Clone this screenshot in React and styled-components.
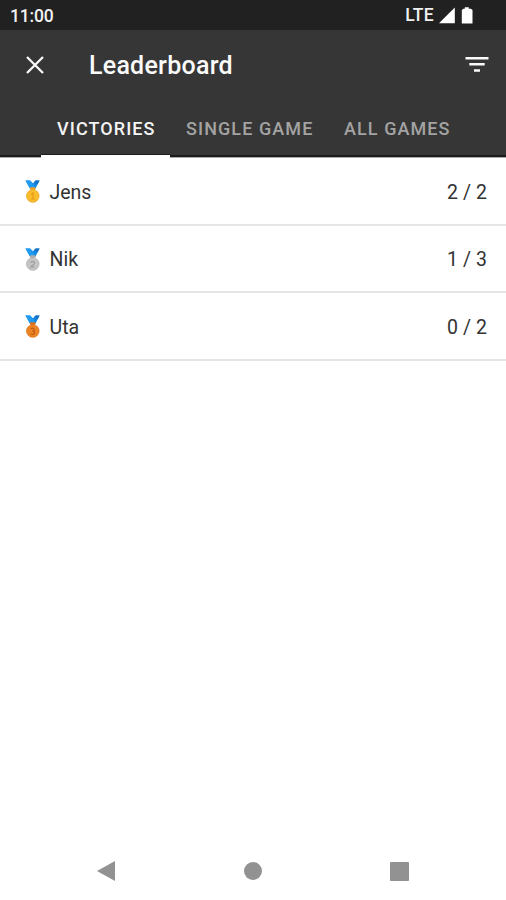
import React from 'react';
import styled, { createGlobalStyle } from 'styled-components';

const GlobalStyle = createGlobalStyle`
  * { box-sizing: border-box; }
  body { margin: 0; background: #fff; font-family: Roboto, sans-serif; }
`;

const Screen = styled.div`
  display: flex;
  flex-direction: column;
  width: 506px;
  height: 900px;
  background: #fff;
  overflow: hidden;
`;

const StatusBar = styled.div`
  display: flex;
  align-items: center;
  justify-content: space-between;
  height: 30px;
  padding: 2px 33px 0 10px;
  background: #212121;
  color: #f1f1f1;
`;

const Clock = styled.span`
  font-size: 17.5px;
  font-weight: 500;
  line-height: 28px;
  letter-spacing: -0.2px;
`;

const StatusIcons = styled.div`
  display: flex;
  align-items: center;
  gap: 5px;
  svg { display: block; margin-top: -2px; }
`;

const Network = styled.span`
  font-size: 17.5px;
  font-weight: 500;
  line-height: 26px;
  padding-bottom: 2px;
  letter-spacing: 0.3px;
`;

const Header = styled.header`
  height: 128px;
  background: #363636;
  color: #fafafa;
`;

const Toolbar = styled.div`
  display: flex;
  align-items: center;
  height: 70px;
  padding: 0 17px 0 26px;
`;

const Title = styled.h1`
  flex: 1;
  margin: 2px 0 0 44px;
  font-size: 25px;
  font-weight: 500;
  line-height: 30px;
  letter-spacing: 0.25px;
`;

const IconButton = styled.button`
  display: block;
  padding: 0;
  border: 0;
  background: none;
  color: inherit;
  svg { display: block; }
`;

const Tabs = styled.nav`
  display: flex;
  height: 58px;
  padding-left: 41px;
  background: linear-gradient(#363636 55px, #1c1c1c 55px, #1c1c1c 57px, #aaa 57px);
`;

const Tab = styled.button`
  flex: none;
  width: ${({ $width }) => $width}px;
  padding: 3px 0 0 16px;
  border: 0;
  border-bottom: 3px solid ${({ $active }) => ($active ? '#fff' : 'transparent')};
  background: none;
  box-shadow: ${({ $active }) => ($active ? 'inset 0 -1px #1c1c1c' : 'none')};
  color: ${({ $active }) => ($active ? '#f5f5f5' : '#a3a3a3')};
  font: 500 18px/52px Roboto, sans-serif;
  letter-spacing: 1.08px;
  text-align: left;
  white-space: nowrap;
`;

const List = styled.ul`
  flex: 1;
  margin: 0;
  padding: 0;
  list-style: none;
`;

const Row = styled.li`
  display: flex;
  align-items: center;
  height: 67.5px;
  padding: 2px 19px 0 24px;
  border-bottom: 2px solid #e5e5e5;
  color: #333;
  font-size: 19.5px;
  line-height: 24px;
  svg { display: block; }
`;

const Name = styled.span`
  flex: 1;
  margin-left: 8.5px;
  padding-top: 2px;
`;

const Score = styled.span`
  padding-top: 2px;
  letter-spacing: 0.1px;
  margin-right: -0.1px;
`;

const NavBar = styled.nav`
  display: flex;
  justify-content: space-between;
  align-items: center;
  height: 58px;
  padding: 0 97px;
  color: #929292;
`;

const medals = {
  gold: { face: '#f9bd2c', edge: '#e9a326', mark: '#e39a1a' },
  silver: { face: '#c5c5c5', edge: '#adadad', mark: '#9c9c9c' },
  bronze: { face: '#ed8424', edge: '#d8701c', mark: '#bd5c12' },
};

function Medal({ kind, place }) {
  const { face, edge, mark } = medals[kind];
  const marks = {
    1: 'M7.2 14.2l1.8-1.2v6M7 19h4',
    2: 'M6.8 14.8c.4-2.3 4-1.7 3.7.4-.1 1.2-2.4 2.2-3.7 3.8h4',
    3: 'M6.8 13.7c1.2-1.1 3.8-.5 3.5 1.1-.1 1-1.2 1-1.9 1 3 0 2.8 3.5.1 3.5-.8 0-1.5-.3-1.9-.8',
  };
  return (
    <svg width="17" height="23" viewBox="0 0 17 23" aria-hidden="true">
      <path d="M1.5.5h4.6L9 3.2 11.6.5h4L11.2 9H6.2z" fill="#1687df" />
      <path d="M1.5.5h4.6l4.8 6L9.7 9H6.2z" fill="#209bf1" />
      <path d="M11.6.5h4l-2.2 4L10.2 2z" fill="#1672c6" />
      <rect x="6" y="7.3" width="5.4" height="2.8" rx="1" fill={edge} />
      <circle cx="8.8" cy="16" r="6.3" fill={face} stroke={edge} strokeWidth=".7" />
      <path d={marks[place]} fill="none" stroke={mark} strokeWidth="1.2" />
    </svg>
  );
}

const players = [
  { name: 'Jens', score: '2 / 2', kind: 'gold' },
  { name: 'Nik', score: '1 / 3', kind: 'silver' },
  { name: 'Uta', score: '0 / 2', kind: 'bronze' },
];

export default function App() {
  return (
    <Screen>
      <GlobalStyle />
      <StatusBar>
        <Clock>11:00</Clock>
        <StatusIcons>
          <Network>LTE</Network>
          <svg width="17" height="17" viewBox="0 0 17 17"><path d="M0 16.3L15.8 .5v15.8z" fill="#fff" /></svg>
          <svg width="12" height="17" viewBox="0 0 12 17"><path d="M3.8 .3h4v1.4h2.1L11.5 3v13.5H.8V3l1.6-1.3h1.4z" fill="#fff" /></svg>
        </StatusIcons>
      </StatusBar>
      <Header>
        <Toolbar>
          <IconButton aria-label="Close">
            <svg width="19" height="19" viewBox="0 0 19 19"><path d="M1 1l16 16M17 1L1 17" fill="none" stroke="currentColor" strokeWidth="2.3" /></svg>
          </IconButton>
          <Title>Leaderboard</Title>
          <IconButton aria-label="Filter">
            <svg width="24" height="18" viewBox="0 0 24 18"><path d="M.5 2.3h23M4.3 8.3h15.4M9 14.5h6" fill="none" stroke="currentColor" strokeWidth="2.5" /></svg>
          </IconButton>
        </Toolbar>
        <Tabs>
          <Tab $active $width={129}>VICTORIES</Tab>
          <Tab $width={158}>SINGLE GAME</Tab>
          <Tab $width={139}>ALL GAMES</Tab>
        </Tabs>
      </Header>
      <List>
        {players.map(({ name, score, kind }, index) => (
          <Row key={name}>
            <Medal kind={kind} place={index + 1} />
            <Name>{name}</Name>
            <Score>{score}</Score>
          </Row>
        ))}
      </List>
      <NavBar>
        <svg width="18" height="20" viewBox="0 0 18 20"><path d="M0 10L18 0v20z" fill="currentColor" /></svg>
        <svg width="18" height="18" viewBox="0 0 18 18"><circle cx="9" cy="9" r="9" fill="currentColor" /></svg>
        <svg width="19" height="19" viewBox="0 0 19 19"><rect width="19" height="19" rx=".8" fill="currentColor" /></svg>
      </NavBar>
    </Screen>
  );
}
